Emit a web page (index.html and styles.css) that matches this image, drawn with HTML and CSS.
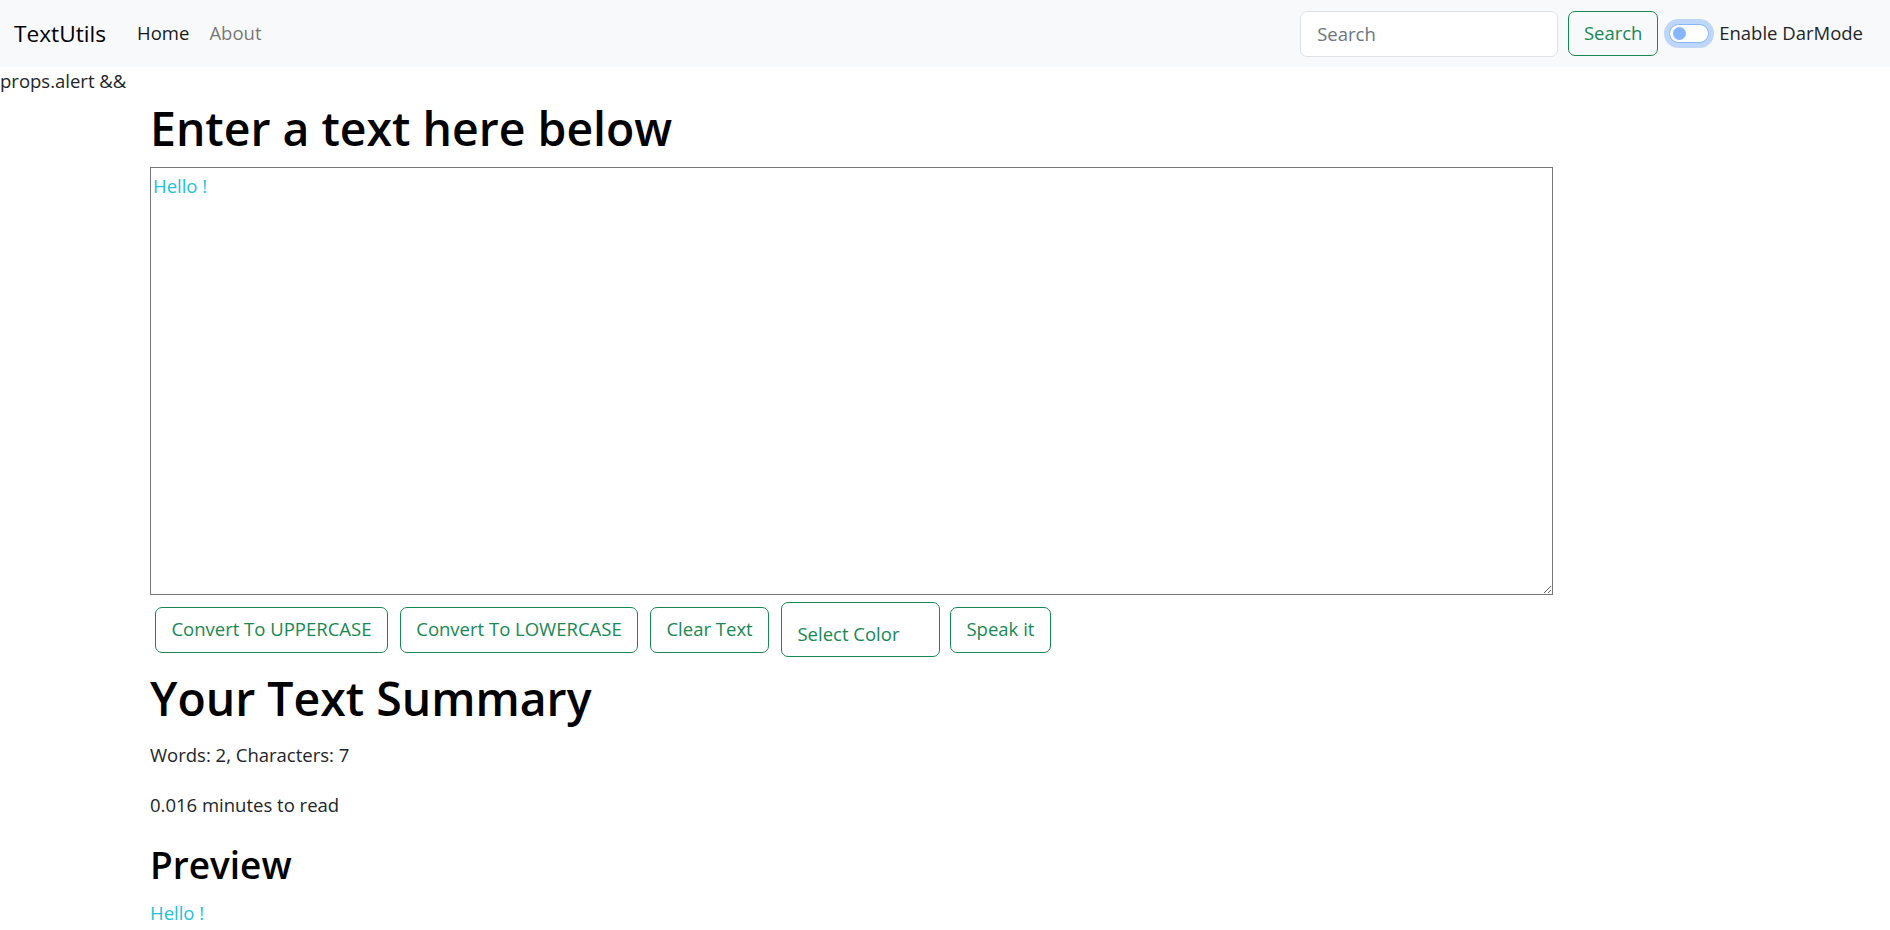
FILE: index.html
```html
<!DOCTYPE html>
<html lang="en">
<head>
<meta charset="utf-8">
<title>TextUtils</title>
<link rel="stylesheet" href="styles.css">
</head>
<body>
<nav class="navbar">
  <a class="brand" href="#">TextUtils</a>
  <ul class="nav-links">
    <li><a class="nav-link active" href="#">Home</a></li>
    <li><a class="nav-link" href="#">About</a></li>
  </ul>
  <form class="nav-right">
    <input class="search-input" type="search" placeholder="Search">
    <button class="btn btn-search" type="button">Search</button>
    <label class="switch-wrap">
      <span class="switch"><span class="knob"></span></span>
      <span class="switch-label">Enable DarMode</span>
    </label>
  </form>
</nav>
<div class="alert-text">props.alert &amp;&amp;</div>
<main class="container">
  <h1 class="title">Enter a text here below</h1>
  <textarea class="text-box">Hello !</textarea>
  <div class="btn-row">
    <button class="btn" type="button">Convert To UPPERCASE</button>
    <button class="btn" type="button">Convert To LOWERCASE</button>
    <button class="btn" type="button">Clear Text</button>
    <div class="btn btn-color">Select Color</div>
    <button class="btn btn-speak" type="button">Speak it</button>
  </div>
  <h1 class="summary-title">Your Text Summary</h1>
  <p class="stat">Words: 2, Characters: 7</p>
  <p class="stat stat-read">0.016 minutes to read</p>
  <h2 class="preview-title">Preview</h2>
  <p class="preview-text">Hello !</p>
</main>
</body>
</html>
```
FILE: styles.css
```css
* { box-sizing: border-box; }

body {
  margin: 0;
  font-family: "Open Sans", "Noto Sans", sans-serif;
  font-size: 18.5px;
  line-height: 28.8px;
  color: #212529;
  background: #fff;
}

/* ---------- navbar ---------- */
.navbar {
  height: 67px;
  background: #f8f9fa;
  display: flex;
  align-items: center;
  padding: 0 27px 0 14px;
}
.brand {
  font-size: 22.7px;
  color: #000;
  text-decoration: none;
  margin-right: 21px;
  line-height: 32px;
}
.nav-links {
  list-style: none;
  display: flex;
  margin: 0;
  padding: 0;
}
.nav-link {
  display: block;
  padding: 0 10px;
  color: rgba(0, 0, 0, 0.55);
  text-decoration: none;
}
.nav-link.active { color: rgba(0, 0, 0, 0.92); }

.nav-right {
  margin: 0 0 0 auto;
  display: flex;
  align-items: center;
}
.search-input {
  width: 258px;
  height: 46px;
  border: 1px solid #dee2e6;
  border-radius: 7px;
  background: #fff;
  padding: 0 16px;
  font: inherit;
  color: #212529;
  margin-right: 10px;
  outline: none;
}
.search-input::placeholder { color: #6c757d; }

.btn {
  display: inline-block;
  font: inherit;
  line-height: 28.8px;
  padding: 7.6px 15.4px;
  border: 1px solid #198754;
  border-radius: 7px;
  color: #198754;
  background: transparent;
  cursor: pointer;
  white-space: nowrap;
}
.btn-search { width: 90px; padding-left: 0; padding-right: 0; text-align: center; }

.switch-wrap {
  display: flex;
  align-items: center;
  margin-left: 11px;
}
.switch {
  position: relative;
  width: 40px;
  height: 19px;
  border: 1px solid #86b7fe;
  border-radius: 10px;
  background: #fff;
  box-shadow: 0 0 0 5px rgba(13, 110, 253, 0.25);
  margin-right: 10px;
}
.knob {
  position: absolute;
  left: 3px;
  top: 2px;
  width: 13px;
  height: 13px;
  border-radius: 50%;
  background: #86b7fe;
}
.switch-label { color: #212529; }

/* ---------- content ---------- */
.alert-text {
  height: 28.8px;
}

.container {
  margin-left: 150px;
  width: 1403px;
}

.title {
  font-size: 46.4px;
  font-weight: 600;
  line-height: 57.6px;
  margin: 4.5px 0 9px;
  color: #000;
}

.text-box {
  display: block;
  width: 1403px;
  height: 428px;
  margin: 0;
  border: 1px solid #767676;
  padding: 4px 2px 2px;
  font: inherit;
  line-height: 28.8px;
  color: #22c1d6;
  background: #fff;
  outline: none;
}

.btn-row {
  display: flex;
  align-items: center;
  gap: 12px;
  margin: 7.5px 0 0 5px;
}
.btn-color {
  width: 159px;
  height: 55px;
  padding: 17px 0 0 15.4px;
}
.btn-speak { margin-left: -2px; }

.summary-title {
  font-size: 46.4px;
  font-weight: 600;
  line-height: 57.6px;
  margin: 12.5px 0 13.2px;
  color: #000;
}

.stat { margin: 0; }
.stat-read { margin-top: 21.2px; }

.preview-title {
  font-size: 37px;
  font-weight: 600;
  line-height: 46px;
  margin: 22.5px 0 11.2px;
  color: #000;
}

.preview-text {
  margin: 0;
  color: #22c1d6;
}
```
